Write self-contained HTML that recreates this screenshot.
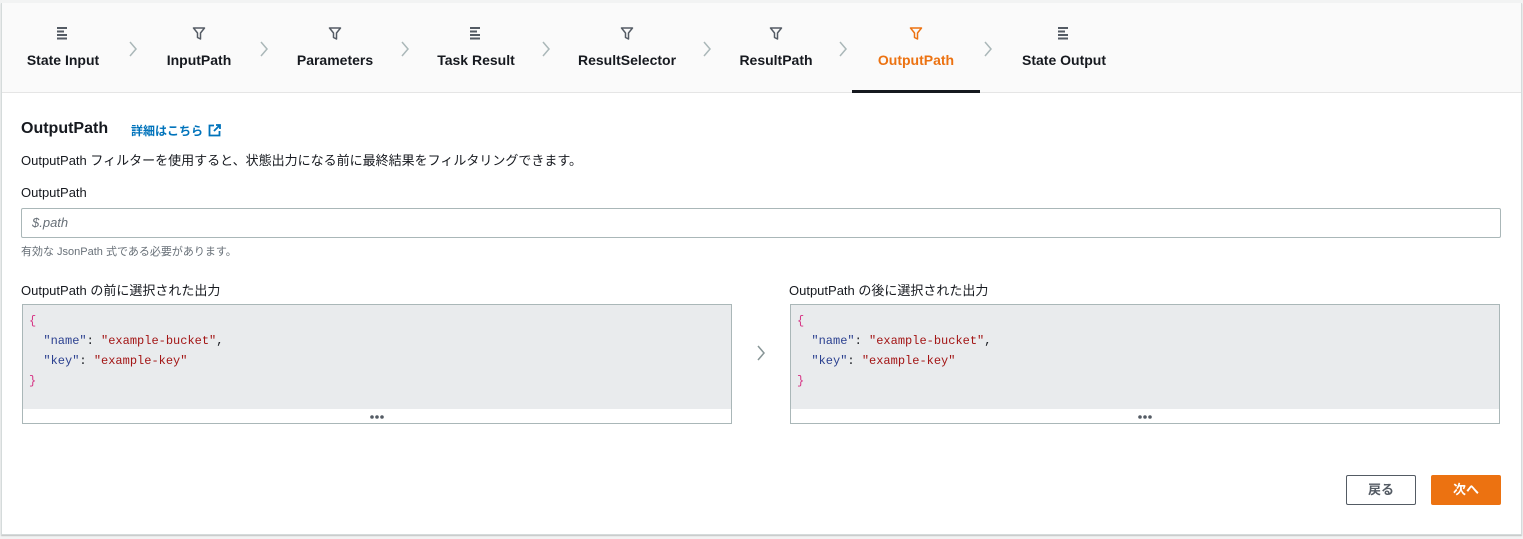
<!DOCTYPE html>
<html><head><meta charset="utf-8"><style>
body{margin:0;width:1523px;height:539px;background:#f2f3f3;font-family:"Liberation Sans","Noto Sans CJK JP",sans-serif;position:relative;overflow:hidden;color:#16191f}
.panel{position:absolute;left:1px;top:3px;width:1519px;height:531px;background:#fff;border:1px solid #d5dbdb;border-top:none;box-shadow:0 1px 1px rgba(0,0,0,.2)}
.bar{position:absolute;left:0;top:0;width:1519px;height:89px;background:#fafafa;border-bottom:1px solid #e5e5e5}
.tab{position:absolute;top:0;text-align:center;transform:translateX(-50%);font-weight:bold;font-size:14px;white-space:nowrap}
.tab svg{position:absolute;left:50%;top:27px;transform:translateX(-50%)}
.tab span{position:absolute;top:52px;left:50%;transform:translateX(-50%)}
.chev{position:absolute;top:40px}
.a{position:absolute;white-space:nowrap}
.code{position:absolute;top:301px;width:708px;height:118px;background:#e9ebed;border:1px solid #aab7b8;font-family:"Liberation Mono","DejaVu Sans Mono",monospace;font-size:12px;line-height:20px}
.code pre{margin:0;padding:6px 0 0 6px;font-family:inherit}
.code .f{position:absolute;left:0;bottom:0;width:100%;height:14px;background:#fff;text-align:center}
.k{color:#2a3f8f}.s{color:#a31515}.b{color:#d63384}
</style></head><body>
<div class="panel">
<div class="bar"></div>
</div>
<div style="position:absolute;left:852px;top:90px;width:128px;height:3px;background:#16191f"></div>
<svg width="0" height="0" style="position:absolute"><defs>
<g id="ln"><path d="M0 1h10M0 4.5h7M0 8h10M0 11.5h10" stroke="#545b64" stroke-width="2" fill="none"/></g>
<g id="fn"><path d="M1 1h11L8 6v6L5 10.5V6z" stroke="#545b64" stroke-width="1.5" fill="none" stroke-linejoin="round"/></g>
</defs></svg>
<div class="tab" style="left:63px"><svg width="12" height="13"><use href="#ln"/></svg><span>State Input</span></div>
<div class="tab" style="left:199px"><svg width="13" height="13"><use href="#fn"/></svg><span>InputPath</span></div>
<div class="tab" style="left:335px"><svg width="13" height="13"><use href="#fn"/></svg><span>Parameters</span></div>
<div class="tab" style="left:476px"><svg width="12" height="13"><use href="#ln"/></svg><span>Task Result</span></div>
<div class="tab" style="left:627px"><svg width="13" height="13"><use href="#fn"/></svg><span>ResultSelector</span></div>
<div class="tab" style="left:776px"><svg width="13" height="13"><use href="#fn"/></svg><span>ResultPath</span></div>
<div class="tab" style="left:916px;color:#ec7211"><svg width="13" height="13"><path d="M1 1h11L8 6v6L5 10.5V6z" stroke="#ec7211" stroke-width="1.5" fill="none" stroke-linejoin="round"/></svg><span>OutputPath</span></div>
<div class="tab" style="left:1064px"><svg width="12" height="13"><use href="#ln"/></svg><span>State Output</span></div>
<svg class="chev" style="left:128px" width="10" height="18"><path d="M2 2l6 7-6 7" stroke="#aab7b8" stroke-width="1.5" fill="none"/></svg>
<svg class="chev" style="left:259px" width="10" height="18"><path d="M2 2l6 7-6 7" stroke="#aab7b8" stroke-width="1.5" fill="none"/></svg>
<svg class="chev" style="left:400px" width="10" height="18"><path d="M2 2l6 7-6 7" stroke="#aab7b8" stroke-width="1.5" fill="none"/></svg>
<svg class="chev" style="left:541px" width="10" height="18"><path d="M2 2l6 7-6 7" stroke="#aab7b8" stroke-width="1.5" fill="none"/></svg>
<svg class="chev" style="left:702px" width="10" height="18"><path d="M2 2l6 7-6 7" stroke="#aab7b8" stroke-width="1.5" fill="none"/></svg>
<svg class="chev" style="left:838px" width="10" height="18"><path d="M2 2l6 7-6 7" stroke="#aab7b8" stroke-width="1.5" fill="none"/></svg>
<svg class="chev" style="left:983px" width="10" height="18"><path d="M2 2l6 7-6 7" stroke="#aab7b8" stroke-width="1.5" fill="none"/></svg>

<div class="a" style="left:21px;top:120px;font-size:16px;font-weight:bold">OutputPath</div>
<div class="a" style="left:131px;top:122px;font-size:12px;font-weight:bold;color:#0073bb">詳細はこちら
<svg width="13" height="13" style="vertical-align:-2px;margin-left:2px"><path d="M6 1.5H1.5v10h10V7M8 1h4v4M12 1L6 7" stroke="#0073bb" stroke-width="1.8" fill="none"/></svg></div>
<div class="a" style="left:21px;top:150px;font-size:13px">OutputPath フィルターを使用すると、状態出力になる前に最終結果をフィルタリングできます。</div>
<div class="a" style="left:21px;top:185px;font-size:13px;color:#16191f">OutputPath</div>
<div class="a" style="left:21px;top:208px;width:1478px;height:28px;border:1px solid #aab7b8;border-radius:2px"></div>
<div class="a" style="left:32px;top:215px;font-size:13px;font-style:italic;color:#687078">$.path</div>
<div class="a" style="left:21px;top:243px;font-size:11px;color:#687078">有効な JsonPath 式である必要があります。</div>
<div class="a" style="left:21px;top:280px;font-size:13px">OutputPath の前に選択された出力</div>
<div class="a" style="left:789px;top:280px;font-size:13px">OutputPath の後に選択された出力</div>
<div class="code" style="left:22px;top:304px"><pre><span class="b">{</span>
  <span class="k">"name"</span>: <span class="s">"example-bucket"</span>,
  <span class="k">"key"</span>: <span class="s">"example-key"</span>
<span class="b">}</span></pre><div class="f"><svg width="24" height="14"><circle cx="7" cy="8" r="1.8" fill="#545b64"/><circle cx="12" cy="8" r="1.8" fill="#545b64"/><circle cx="17" cy="8" r="1.8" fill="#545b64"/></svg></div></div>
<div class="code" style="left:790px;top:304px"><pre><span class="b">{</span>
  <span class="k">"name"</span>: <span class="s">"example-bucket"</span>,
  <span class="k">"key"</span>: <span class="s">"example-key"</span>
<span class="b">}</span></pre><div class="f"><svg width="24" height="14"><circle cx="7" cy="8" r="1.8" fill="#545b64"/><circle cx="12" cy="8" r="1.8" fill="#545b64"/><circle cx="17" cy="8" r="1.8" fill="#545b64"/></svg></div></div>
<svg class="a" style="left:756px;top:344px" width="10" height="18"><path d="M2 2l6 7-6 7" stroke="#879596" stroke-width="1.5" fill="none"/></svg>
<div class="a" style="left:1346px;top:475px;width:68px;height:28px;border:1px solid #545b64;border-radius:2px;font-size:13px;font-weight:bold;color:#545b64;text-align:center;line-height:28px">戻る</div>
<div class="a" style="left:1431px;top:475px;width:70px;height:30px;background:#ec7211;border-radius:2px;font-size:13px;font-weight:bold;color:#fff;text-align:center;line-height:30px">次へ</div>
</body></html>
